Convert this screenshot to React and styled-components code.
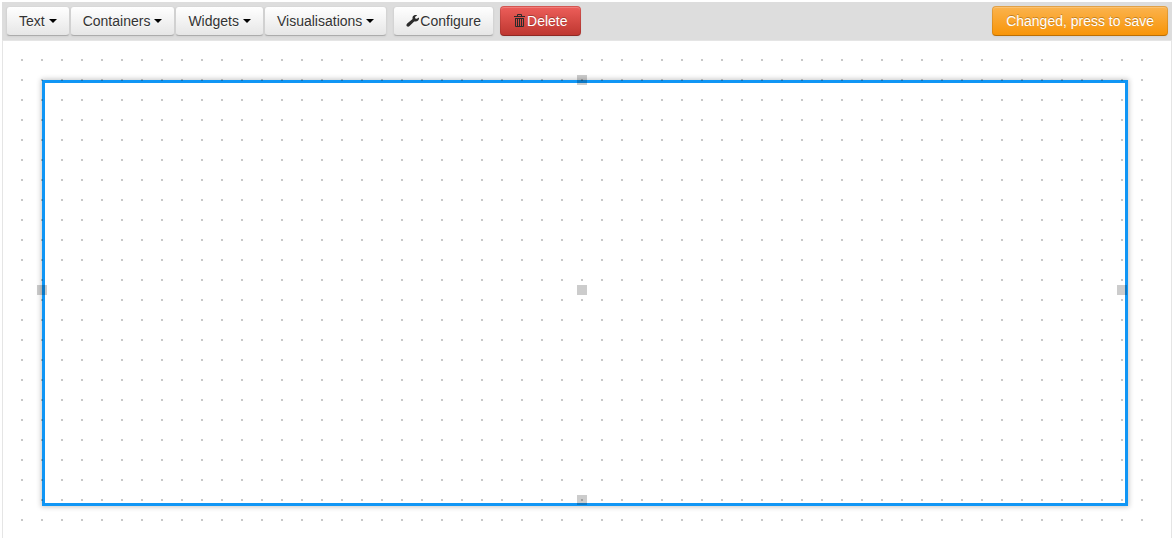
import React from 'react';
import styled, { createGlobalStyle, css } from 'styled-components';

const GlobalStyle = createGlobalStyle`
  * { box-sizing: border-box; }
  body {
    margin: 0;
    background: #fff;
    color: #333;
    font: 14px/20px "Liberation Sans", Arial, sans-serif;
  }
`;

const Page = styled.div`
  display: flex;
  flex-direction: column;
  min-height: 100vh;
  padding: 2px 2px 0;
`;

const Toolbar = styled.header`
  display: flex;
  align-items: center;
  gap: 6px;
  padding: 4px;
  background: #ddd;
`;

const Menus = styled.nav`
  display: flex;
`;

const tones = {
  plain: css`
    color: #333;
    text-shadow: 0 1px 1px rgba(255, 255, 255, 0.75);
    background: linear-gradient(#fff, #e6e6e6) padding-box;
    border-color: rgba(0, 0, 0, 0.02) rgba(0, 0, 0, 0.04) rgba(0, 0, 0, 0.22);
  `,
  danger: css`
    color: #fff;
    text-shadow: 0 -1px 0 rgba(0, 0, 0, 0.25);
    background: linear-gradient(#ee5f5b, #bd362f);
    background-origin: border-box;
    border-color: rgba(0, 0, 0, 0.1) rgba(0, 0, 0, 0.1) rgba(0, 0, 0, 0.25);
  `,
  warning: css`
    color: #fff;
    text-shadow: 0 -1px 0 rgba(0, 0, 0, 0.25);
    background: linear-gradient(#fbb450, #f89406);
    background-origin: border-box;
    border-color: rgba(0, 0, 0, 0.1) rgba(0, 0, 0, 0.1) rgba(0, 0, 0, 0.25);
  `,
};

const Button = styled.button`
  display: inline-flex;
  align-items: center;
  padding: 4px 12px;
  border: 1px solid transparent;
  border-radius: 4px;
  font: inherit;
  white-space: nowrap;
  cursor: pointer;
  box-shadow: inset 0 1px 0 rgba(255, 255, 255, 0.2), 0 1px 2px rgba(0, 0, 0, 0.05);
  ${({ $tone = 'plain' }) => tones[$tone]}
`;

const Caret = styled.span`
  margin-left: 4px;
  border: 4px solid transparent;
  border-top-color: #000;
  border-bottom-width: 0;
`;

const Icon = styled.svg`
  width: 14px;
  height: 14px;
  fill: #2b2b2b;
`;

const Save = styled(Button)`
  margin-left: auto;
  padding: 4px 13px;
`;

const Canvas = styled.main`
  position: relative;
  display: flex;
  flex: 1;
  padding: 39px 43px 32px 39px;
  border: 1px solid #e5e5e5;
  border-bottom: 0;
`;

const Selection = styled.section`
  position: relative;
  flex: 1;
  min-height: 200px;
  border: 3px solid #1096f5;
  box-shadow: 0 0 5px 1px rgba(0, 0, 0, 0.22);
`;

const Grid = styled.div`
  position: absolute;
  inset: 18px 28px 17px 18px;
  pointer-events: none;
  background: conic-gradient(from 270deg at 2px 2px, rgba(0, 0, 0, 0.22) 90deg, transparent 0) 0 0 / 20px 20px;
`;

const Handles = styled.div`
  position: absolute;
  inset: 34px 44px 33px 34px;
  z-index: 1;
`;

const Handle = styled.span`
  position: absolute;
  left: calc((100% - 10px) * ${({ $x }) => $x});
  top: calc((100% - 10px) * ${({ $y }) => $y});
  width: 10px;
  height: 10px;
  background: rgba(0, 0, 0, 0.2);
  cursor: ${({ $cursor }) => $cursor};
`;

const menus = ['Text', 'Containers', 'Widgets', 'Visualisations'];

const handles = [
  { id: 'top', x: 0.5, y: 0, cursor: 'ns-resize' },
  { id: 'left', x: 0, y: 0.5, cursor: 'ew-resize' },
  { id: 'centre', x: 0.5, y: 0.5, cursor: 'move' },
  { id: 'right', x: 1, y: 0.5, cursor: 'ew-resize' },
  { id: 'bottom', x: 0.5, y: 1, cursor: 'ns-resize' },
];

const WrenchIcon = () => (
  <Icon viewBox="0 0 14 14" aria-hidden="true">
    <path d="M13 3.6 10.8 4.8 9.3 4.4 9 3 11.2 1.2C9.9.7 8 .9 7.1 2.1 6.4 3 6.4 4 6.6 5L1.2 9.4C.3 10.2.2 11.5.9 12.2 1.7 12.9 2.8 12.7 3.5 12L8.2 7.4C9.5 7.8 11.2 7.6 12.1 6.6 12.9 5.8 13.2 4.6 13 3.6Z" />
  </Icon>
);

const TrashIcon = () => (
  <Icon viewBox="0 0 14 14" aria-hidden="true">
    <path
      fillRule="evenodd"
      d="M4 1Q4 0 5 0H8Q9 0 9 1V2H12V3H1V2H4ZM5 1V2H8V1ZM2 4H11V12Q11 13 10 13H3Q2 13 2 12ZM3 5V12H4V5ZM5 5V12H6V5ZM7 5V12H8V5ZM9 5V12H10V5Z"
    />
  </Icon>
);

export default function App() {
  return (
    <>
      <GlobalStyle />
      <Page>
        <Toolbar>
          <Menus aria-label="Insert">
            {menus.map((name) => (
              <Button key={name} type="button" aria-haspopup="menu">
                {name}
                <Caret />
              </Button>
            ))}
          </Menus>
          <Button type="button">
            <WrenchIcon />
            Configure
          </Button>
          <Button type="button" $tone="danger">
            <TrashIcon />
            Delete
          </Button>
          <Save type="button" $tone="warning">
            Changed, press to save
          </Save>
        </Toolbar>
        <Canvas>
          <Selection aria-label="Selected container" />
          <Grid />
          <Handles>
            {handles.map(({ id, x, y, cursor }) => (
              <Handle key={id} $x={x} $y={y} $cursor={cursor} />
            ))}
          </Handles>
        </Canvas>
      </Page>
    </>
  );
}
